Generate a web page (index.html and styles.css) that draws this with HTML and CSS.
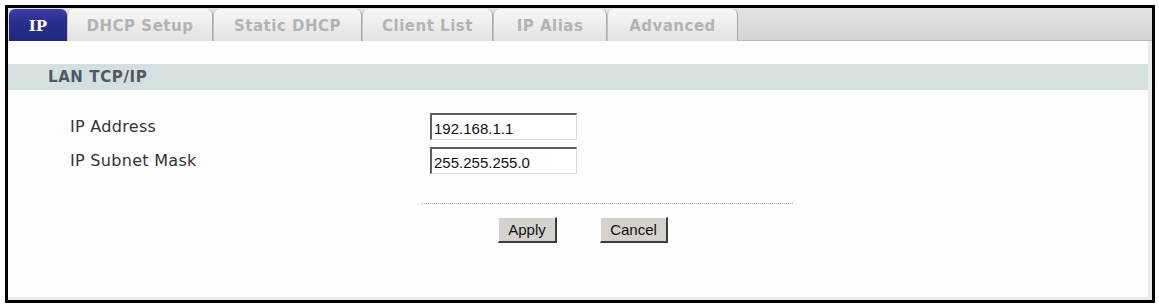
FILE: index.html
```html
<!DOCTYPE html>
<html lang="en">
<head>
  <meta charset="UTF-8" />
  <title>LAN – IP</title>
  <meta name="viewport" content="width=device-width, initial-scale=1" />
  <link rel="stylesheet" href="styles.css">
</head>
<body>

  <div class="frame">
    <div class="tabs">
      <div class="tab active" style="width:58px">IP</div>
      <div class="tab" style="width:146px">DHCP Setup</div>
      <div class="tab" style="width:149px">Static DHCP</div>
      <div class="tab" style="width:131px">Client List</div>
      <div class="tab" style="width:114px">IP Alias</div>
      <div class="tab" style="width:131px">Advanced</div>
    </div>

    <div class="content">
      <div class="band">LAN TCP/IP</div>

      <div class="form">
        <label for="ip">IP Address</label>
        <input type="text" id="ip" value="192.168.1.1" />
        <label for="mask">IP Subnet Mask</label>
        <input type="text" id="mask" value="255.255.255.0" />
      </div>

      <div class="divider"></div>

      <div class="actions">
        <button class="btn apply">Apply</button>
        <button class="btn cancel">Cancel</button>
      </div>
    </div>
  </div>

</body>
</html>
```

FILE: styles.css
```css
:root {
  --tab-text: #b3b3b3;
  --band: #d6dfe0;
  --band-text: #4e5965;
  --label: #333;
}
body {
  margin: 0;
  background: #fff;
  font-family: 'DejaVu Sans', Verdana, sans-serif;
}
.frame {
  box-sizing: border-box;
  height: 298px;
  margin: 5px 4px 0 5px;
  border: 3px solid #000;
  display: flex;
  flex-direction: column;
}
.tabs {
  display: flex;
  height: 32px;
  border-bottom: 1px solid #b9b9b9;
  background: linear-gradient(#e4e2e4, #d5d4d6);
  padding-left: 1px;
}
.tab {
  box-sizing: border-box;
  display: flex;
  align-items: center;
  justify-content: center;
  height: 32px;
  margin-top: 1px;
  border-radius: 6px 6px 0 0;
  border-left: 1px solid #c4c4c4;
  border-right: 1px solid #a8a8a8;
  background: linear-gradient(#f7f7f7, #e2e2e2);
  color: var(--tab-text);
  font-weight: bold;
  font-size: 15px;
  letter-spacing: 0.5px;
  padding-top: 1px;
}
.tab.active {
  background: linear-gradient(#3b3fa6, #2a2d8c 40%, #25287f);
  border: none;
  color: #fff;
  font-family: 'DejaVu Serif', Georgia, serif;
  letter-spacing: 0;
}
.content {
  flex: 1;
  background: #fefdfe;
  border-right: 4px solid #ececec;
  border-bottom: 3px solid #ececec;
}
.band {
  margin-top: 23px;
  height: 26px;
  line-height: 26px;
  background: var(--band);
  padding-left: 40px;
  color: var(--band-text);
  font-weight: bold;
  font-size: 15px;
  letter-spacing: 0.6px;
}
.form {
  display: grid;
  grid-template-columns: 360px 147px;
  row-gap: 7px;
  margin: 23px 0 0 62px;
  align-items: center;
}
label {
  color: var(--label);
  font-size: 16px;
  letter-spacing: 0.3px;
}
input {
  box-sizing: border-box;
  width: 147px;
  height: 27px;
  padding: 2px 0 0 2px;
  border-style: solid;
  border-width: 2px 1px 1px 2px;
  border-color: #5e5e5e #dcdcdc #dcdcdc #5e5e5e;
  font-family: 'Liberation Sans', Arial, sans-serif;
  font-size: 15px;
  color: #111;
  background: #fff;
  outline: none;
}
.divider {
  margin: 29px 0 0 414px;
  width: 371px;
  border-top: 1px dotted #a8a8a8;
}
.actions {
  display: flex;
  gap: 43px;
  margin: 13px 0 0 490px;
}
.btn {
  box-sizing: border-box;
  height: 26px;
  padding: 0;
  background: #d5d2cd;
  border-style: solid;
  border-width: 1px 2px 2px 1px;
  border-color: #fafafa #3c3c3c #3c3c3c #fafafa;
  font-family: 'Liberation Sans', Arial, sans-serif;
  font-size: 15px;
  color: #111;
  cursor: pointer;
}
.apply {
  width: 59px;
}
.cancel {
  width: 68px;
}
```
